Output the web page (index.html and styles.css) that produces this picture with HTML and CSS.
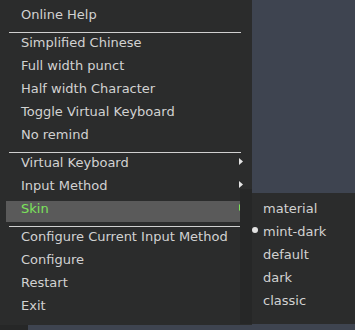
FILE: index.html
```html
<!DOCTYPE html>
<html>
<head>
<meta charset="utf-8">
<link rel="stylesheet" href="styles.css">
</head>
<body>
<div class="menu">
  <div class="item">Online Help</div>
  <div class="sep"></div>
  <div class="item">Simplified Chinese</div>
  <div class="item">Full width punct</div>
  <div class="item">Half width Character</div>
  <div class="item">Toggle Virtual Keyboard</div>
  <div class="item">No remind</div>
  <div class="sep"></div>
  <div class="item">Virtual Keyboard<svg class="arrow" width="4" height="7" viewBox="0 0 4 7"><polygon points="0,0 4,3.5 0,7" fill="currentColor"/></svg></div>
  <div class="item">Input Method<svg class="arrow" width="4" height="7" viewBox="0 0 4 7"><polygon points="0,0 4,3.5 0,7" fill="currentColor"/></svg></div>
  <div class="item active">Skin<svg class="arrow" width="4" height="7" viewBox="0 0 4 7"><polygon points="0,0 4,3.5 0,7" fill="currentColor"/></svg></div>
  <div class="sep"></div>
  <div class="item">Configure Current Input Method</div>
  <div class="item">Configure</div>
  <div class="item">Restart</div>
  <div class="item">Exit</div>
</div>
<div class="strip"><div class="strip-dark"></div></div>
<div class="submenu">
  <div class="sub-item"><span class="radio"></span>material</div>
  <div class="sub-item"><span class="radio checked"></span>mint-dark</div>
  <div class="sub-item"><span class="radio"></span>default</div>
  <div class="sub-item"><span class="radio"></span>dark</div>
  <div class="sub-item"><span class="radio"></span>classic</div>
</div>
</body>
</html>
```
FILE: styles.css
```css
html, body {
  margin: 0;
  padding: 0;
}
body {
  width: 355px;
  height: 330px;
  overflow: hidden;
  position: relative;
  background: #3e4450;
  font-family: "DejaVu Sans", sans-serif;
  font-size: 13px;
  color: #d2d2d2;
}
.menu {
  display: flex;
  flex-direction: column;
  width: 252px;
  height: 325px;
  box-sizing: border-box;
  padding-top: 6px;
  background: #2b2c2c;
}
.item {
  display: flex;
  align-items: flex-start;
  flex: none;
  height: 21px;
  margin: 1px 12px 1px 6px;
  padding-left: 15px;
  line-height: 15px;
  white-space: nowrap;
}
.item.active {
  background: #5a5a5a;
  color: #7ce35a;
}
.arrow {
  margin-left: auto;
  margin-right: -3px;
  margin-top: 3px;
  color: #e4e4e4;
  flex: none;
}
.item.active .arrow {
  color: #7ce35a;
}
.sep {
  flex: none;
  height: 1px;
  margin: 3px 11px 1px 9px;
  background: #d0d0d0;
}
.strip {
  height: 5px;
}
.strip-dark {
  width: 28px;
  height: 5px;
  background: #262727;
}
.submenu {
  position: absolute;
  left: 252px;
  top: 193px;
  display: flex;
  flex-direction: column;
  width: 103px;
  height: 131px;
  box-sizing: border-box;
  padding-top: 7px;
  background: #2b2c2c;
}
.submenu::before {
  content: "";
  position: absolute;
  left: -12px;
  top: -4px;
  bottom: 0;
  width: 12px;
  background: #262727;
}
.sub-item {
  display: flex;
  align-items: flex-start;
  flex: none;
  height: 21px;
  margin: 1px 0;
  line-height: 15px;
  white-space: nowrap;
}
.radio {
  width: 6px;
  height: 6px;
  margin-top: 3px;
  margin-right: 5px;
  border-radius: 50%;
  flex: none;
}
.radio.checked {
  background: #e2e2e2;
}
```
